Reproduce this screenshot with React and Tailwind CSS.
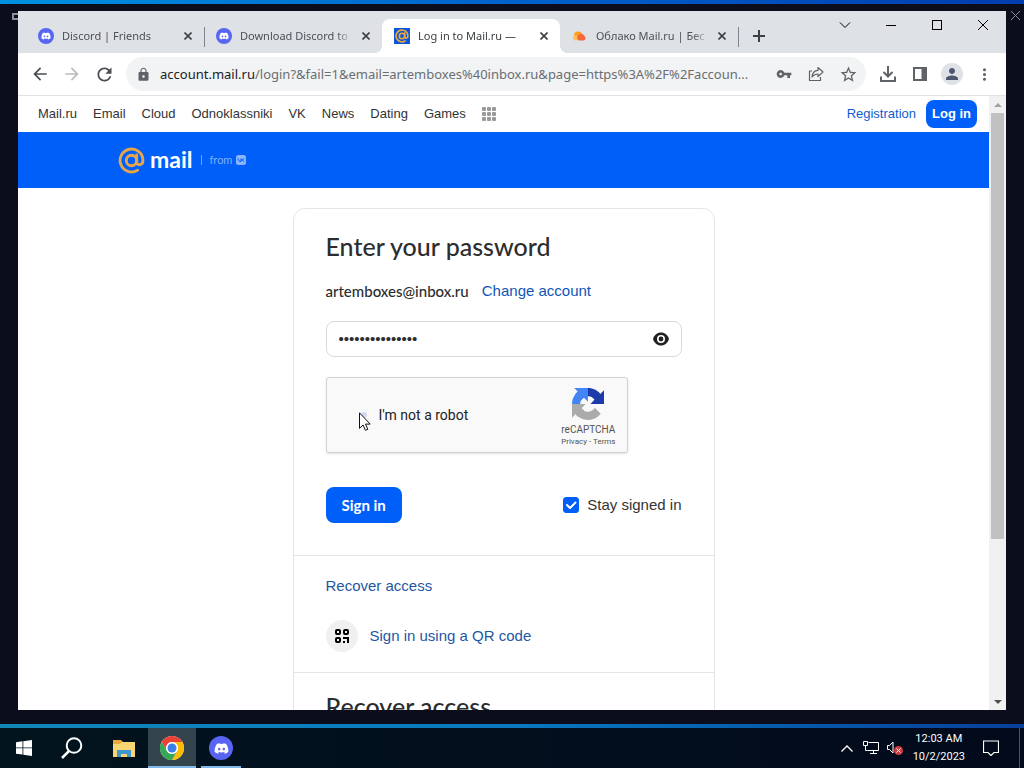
import React, { useState } from 'react';
import { FaDiscord } from 'react-icons/fa';
import {
  MdArrowBack,
  MdArrowForward,
  MdRefresh,
  MdLock,
  MdVpnKey,
  MdStarBorder,
  MdPerson,
  MdMoreVert,
} from 'react-icons/md';

const NAV_LINKS = ['Mail.ru', 'Email', 'Cloud', 'Odnoklassniki', 'VK', 'News', 'Dating', 'Games'];

const DiscordIcon = () => (
  <span className="flex size-4 shrink-0 items-center justify-center rounded-full bg-[#5865f2] text-white">
    <FaDiscord size={10} />
  </span>
);

const AtSign = ({ className, strokeWidth = 2.8 }) => (
  <svg viewBox="0 0 26 26" className={className} fill="none" stroke="currentColor" strokeWidth={strokeWidth}>
    <circle cx="13" cy="13" r="5" />
    <path d="M18 7.6v6.800c0 3.800 6 3.600 6-1.400A11 11 0 1 0 18.800 22.300" strokeLinecap="round" />
  </svg>
);

const MailIcon = () => (
  <span className="flex size-4 shrink-0 items-center justify-center bg-[#0a55d8] text-[#f0a83a]">
    <AtSign className="size-[14px]" strokeWidth={3} />
  </span>
);

const CloudIcon = () => (
  <svg viewBox="0 0 16 16" className="size-4 shrink-0">
    <circle cx="6" cy="7.500" r="4" fill="#ff9e1b" />
    <circle cx="3.500" cy="9.800" r="2.600" fill="#ffc35a" />
    <path d="M7 12.500a3.300 3.300 0 0 1-.8-5.500 3.700 3.700 0 0 1 6 .8A2.500 2.500 0 0 1 11.500 12.500z" fill="#f4683c" />
  </svg>
);

const TABS = [
  { title: 'Discord | Friends', Icon: DiscordIcon, divider: true },
  { title: 'Download Discord to', Icon: DiscordIcon },
  { title: 'Log in to Mail.ru —', Icon: MailIcon, active: true },
  { title: 'Облако Mail.ru | Бес', Icon: CloudIcon, divider: true },
];

const Tab = ({ title, Icon, active, divider }) => (
  <div
    className={`relative flex h-[34px] w-[178px] min-w-0 items-center rounded-t-lg px-3 ${
      active ? 'bg-white' : ''
    }`}
  >
    {active && (
      <>
        <span className="absolute -left-2 bottom-0 size-2 bg-[radial-gradient(circle_at_0_0,transparent_8px,#fff_8px)]" />
        <span className="absolute -right-2 bottom-0 size-2 bg-[radial-gradient(circle_at_100%_0,transparent_8px,#fff_8px)]" />
      </>
    )}
    <Icon />
    <span
      className={`ml-2 min-w-0 flex-1 whitespace-nowrap text-[11px] leading-4 [mask-image:linear-gradient(to_right,#000_84%,transparent)] ${
        active ? 'text-[#3c4043]' : 'text-[#4d5156]'
      }`}
    >
      {title}
    </span>
    <button type="button" aria-label={`Close ${title}`} className="ml-2 shrink-0 text-[#3c4043]">
      <svg viewBox="0 0 8 8" className="size-2" stroke="currentColor" strokeWidth="1.600">
        <path d="M.5.5l7 7M7.500.500l-7 7" />
      </svg>
    </button>
    {divider && <span className="absolute -right-px top-2 h-5 w-px bg-[#80868b]" />}
  </div>
);

const TabStrip = () => (
  <div className="flex h-[42px] shrink-0 items-start justify-between bg-[#dee1e6]">
    <div className="flex min-w-0 items-end pl-2 pt-2">
      {TABS.map((tab) => (
        <Tab key={tab.title} {...tab} />
      ))}
      <button type="button" aria-label="New tab" className="flex h-[34px] w-[42px] items-center justify-center text-[#3c4043]">
        <svg viewBox="0 0 12 12" className="size-3" stroke="currentColor" strokeWidth="2">
          <path d="M6 0v12M0 6h12" />
        </svg>
      </button>
    </div>
    <div className="flex shrink-0 text-black">
      <button type="button" aria-label="Search tabs" className="flex h-7 w-[46px] items-center justify-center">
        <svg viewBox="0 0 12 12" className="size-3" fill="none" stroke="currentColor">
          <path d="M1 3.500l5 5 5-5" />
        </svg>
      </button>
      <button type="button" aria-label="Minimize" className="flex h-7 w-[46px] items-center justify-center">
        <span className="h-px w-[10px] bg-black" />
      </button>
      <button type="button" aria-label="Maximize" className="flex h-7 w-[46px] items-center justify-center">
        <span className="size-[10px] border border-black" />
      </button>
      <button type="button" aria-label="Close window" className="flex h-7 w-[46px] items-center justify-center">
        <svg viewBox="0 0 12 12" className="size-3" fill="none" stroke="currentColor">
          <path d="M1 1l10 10M11 1L1 11" />
        </svg>
      </button>
    </div>
  </div>
);

const ToolButton = ({ label, children, className = 'text-[#5f6368]' }) => (
  <button type="button" aria-label={label} className={`flex h-8 w-8 shrink-0 items-center justify-center ${className}`}>
    {children}
  </button>
);

const Toolbar = () => (
  <div className="flex h-[43px] shrink-0 items-center border-b border-[#dfe1e5] bg-white px-1.5">
    <ToolButton label="Back" className="text-[#4a4d51]">
      <MdArrowBack size={20} />
    </ToolButton>
    <ToolButton label="Forward" className="text-[#babcbe]">
      <MdArrowForward size={20} />
    </ToolButton>
    <ToolButton label="Reload" className="text-[#4a4d51]">
      <MdRefresh size={21} />
    </ToolButton>
    <div className="ml-1.5 flex h-[34px] min-w-0 flex-1 items-center rounded-full bg-[#f1f3f4] pl-2.5 pr-0.5">
      <MdLock size={15} className="shrink-0 text-[#5f6368]" />
      <div className="ml-[9px] min-w-0 flex-1 whitespace-nowrap text-[13px] leading-5 text-[#6a6e73]">
        <span className="text-[#202124]">account.mail.ru</span>
        /login?&amp;fail=1&amp;email=artemboxes%40inbox.ru&amp;page=https%3A%2F%2Faccoun...
      </div>
      <ToolButton label="Passwords">
        <MdVpnKey size={16} />
      </ToolButton>
      <ToolButton label="Share">
        <svg viewBox="0 0 16 16" className="size-4" fill="none" stroke="currentColor" strokeWidth="1.200" strokeLinejoin="round">
          <path d="M4 5H1.500v9.500h11V11" />
          <path d="M10 1.500l5 4.500-5 4.500V8C7.500 8 5.500 9 4 11c.3-4 2.700-6.500 6-6.700z" />
        </svg>
      </ToolButton>
      <ToolButton label="Bookmark">
        <MdStarBorder size={19} />
      </ToolButton>
    </div>
    <div className="ml-1.5 flex">
      <ToolButton label="Downloads">
        <svg viewBox="0 0 16 16" className="size-4" fill="none" stroke="currentColor" strokeWidth="2">
          <path d="M8 0v10M3.500 6L8 10.500 12.500 6M1 10.500V15h14v-4.500" />
        </svg>
      </ToolButton>
      <ToolButton label="Side panel">
        <svg viewBox="0 0 14 14" className="size-[14px]" fill="currentColor">
          <path fillRule="evenodd" d="M0 0h14v14H0zM2 2v10h6.500V2z" />
        </svg>
      </ToolButton>
      <ToolButton label="Profile">
        <span className="flex size-[22px] items-center justify-center rounded-full bg-[#dee1e6] text-[#4f5670]">
          <MdPerson size={18} />
        </span>
      </ToolButton>
      <ToolButton label="Menu">
        <MdMoreVert size={19} />
      </ToolButton>
    </div>
  </div>
);

const PortalNav = () => (
  <nav className="flex h-9 items-center justify-between pl-5 pr-3 text-[13px] text-[#333333]">
    <div className="flex items-center gap-4">
      {NAV_LINKS.map((link) => (
        <a key={link} href="#">
          {link}
        </a>
      ))}
      <button type="button" aria-label="All projects" className="grid grid-cols-3 gap-px">
        {Array.from({ length: 9 }, (_, i) => (
          <span key={i} className="size-1 rounded-[1px] bg-[#9a9a9a]" />
        ))}
      </button>
    </div>
    <div className="flex items-center gap-2.5">
      <a href="#" className="text-[#0f5bd0]">
        Registration
      </a>
      <button type="button" className="h-7 rounded-lg bg-[#005ff9] px-1.5 font-bold text-white">
        Log in
      </button>
    </div>
  </nav>
);

const Brand = () => (
  <header className="flex h-14 items-center bg-[#005ff9] px-[100px] font-['Lato',sans-serif]">
    <AtSign className="size-[27px] text-[#e5a54b]" />
    <span className="ml-[5px] pb-0.5 text-[23px] font-bold leading-7 text-white">mail</span>
    <span className="ml-2 h-2.5 w-px bg-[#6ba2fc]" />
    <span className="ml-2 text-[11px] leading-4 text-[#7fb0fd]">from</span>
    <svg viewBox="0 0 10 10" className="ml-1 size-2.5">
      <rect width="10" height="10" rx="2.500" fill="#8ab5fd" />
      <path d="M2 3.500c.3 2 1.400 3.100 3 3.100V3.500M8 3.500C7.700 4.600 6.500 5 5 5c1.500 0 2.600.6 3 1.700" stroke="#005ff9" fill="none" />
    </svg>
  </header>
);

const RecaptchaLogo = () => (
  <svg viewBox="0 0 64 64" className="size-8">
    <path
      d="M64 31.955l-.033-1.370V4.687l-7.160 7.160C50.948 4.674 42.033.093 32.050.093c-10.400 0-19.622 4.960-25.458 12.640l11.736 11.860a15.550 15.550 0 0 1 4.754-5.334c2.050-1.600 4.952-2.906 8.968-2.906.485 0 .860.057 1.135.163 4.976.393 9.288 3.140 11.828 7.124l-8.307 8.307L64 31.953"
      fill="#1c3aa9"
    />
    <path
      d="M31.862.094l-1.370.033H4.594l7.160 7.160C4.580 13.147 0 22.060 0 32.046c0 10.400 4.960 19.622 12.640 25.458L24.500 45.768a15.550 15.550 0 0 1-5.334-4.754c-1.600-2.050-2.906-4.952-2.906-8.968 0-.485.057-.860.163-1.135.393-4.976 3.140-9.288 7.124-11.828l8.307 8.307L31.860.095"
      fill="#4285f4"
    />
    <path
      d="M.001 32.045l.033 1.370v25.898l7.160-7.160c5.860 7.173 14.774 11.754 24.760 11.754 10.400 0 19.622-4.960 25.458-12.640l-11.736-11.860a15.550 15.550 0 0 1-4.754 5.334c-2.050 1.600-4.952 2.906-8.968 2.906-.485 0-.860-.057-1.135-.163-4.976-.393-9.288-3.140-11.828-7.124l8.307-8.307c-10.522.040-22.400.066-27.295-.005"
      fill="#ababab"
    />
  </svg>
);

const Cursor = () => (
  <svg viewBox="0 0 12 19" className="pointer-events-none absolute left-8 top-[34px] h-[19px] w-3">
    <path d="M.5.8v15.600l3.600-3.400 2.300 5.300 2.400-1-2.300-5.200h4.700z" fill="#fff" stroke="#111" />
  </svg>
);

const Recaptcha = () => (
  <div className="relative mt-5 flex h-[76px] max-w-[302px] items-center justify-between rounded-[3px] border border-[#d3d3d3] bg-[#f9f9f9] pl-3 pr-[11px] shadow-sm">
    <label className="flex items-center gap-3 font-['Roboto',sans-serif] text-[14px] text-[#222]">
      <span className="relative flex size-7 items-center justify-end">
        <input type="checkbox" className="absolute inset-0 opacity-0" />
        <span className="size-1.5 rounded-full bg-[#d5d9f2]" />
      </span>
      I'm not a robot
    </label>
    <div className="flex flex-col items-center pt-1.5 font-['Roboto',sans-serif] text-[#555]">
      <RecaptchaLogo />
      <span className="mt-1 text-[10px] leading-3">reCAPTCHA</span>
      <span className="text-[8px] leading-3">
        <a href="#">Privacy</a> - <a href="#">Terms</a>
      </span>
    </div>
    <Cursor />
  </div>
);

const LoginCard = () => {
  const [visible, setVisible] = useState(false);
  const [stay, setStay] = useState(true);

  return (
    <main className="mx-auto mt-5 w-full max-w-[422px] rounded-t-xl border border-[#e4e5e7] text-[15px] leading-5 text-[#2c2d2e]">
      <form className="px-8 pb-8 pt-[22px]" onSubmit={(e) => e.preventDefault()}>
        <h1 className="font-['Lato',sans-serif] text-[25px] font-medium leading-[30px]">Enter your password</h1>
        <div className="mt-5 flex gap-[13px]">
          <span className="font-['Lato',sans-serif] font-medium">artemboxes@inbox.ru</span>
          <a href="#" className="text-[#0f55b5]">
            Change account
          </a>
        </div>

        <div className="mt-5 flex h-9 items-center rounded-lg border border-[#d9dadc] px-3">
          <input
            type={visible ? 'text' : 'password'}
            aria-label="Password"
            defaultValue="qwertyuiopasdfg"
            className="min-w-0 flex-1 text-[15px] outline-none"
          />
          <button type="button" aria-label="Show password" onClick={() => setVisible((v) => !v)}>
            <svg viewBox="0 0 16 14" className="h-[14px] w-4">
              <path d="M8 .5C4.200.500 1.200 3 0 7c1.200 4 4.200 6.500 8 6.500s6.800-2.500 8-6.500C14.800 3 11.800.5 8 .5z" fill="#222" />
              <circle cx="8" cy="7" r="3.200" fill="#222" stroke="#fff" strokeWidth="1.600" />
            </svg>
          </button>
        </div>

        <Recaptcha />

        <div className="mt-[34px] flex items-center justify-between">
          <button
            type="submit"
            className="h-9 rounded-lg bg-[#005ff9] px-4 font-['Lato',sans-serif] text-[15px] font-bold text-white"
          >
            Sign in
          </button>
          <label className="flex items-center gap-2 text-[#333]">
            <span className="relative flex size-4">
              <input
                type="checkbox"
                checked={stay}
                onChange={(e) => setStay(e.target.checked)}
                className="size-4 appearance-none rounded-[3px] border border-[#005ff9] checked:bg-[#005ff9]"
              />
              <svg viewBox="0 0 16 16" className="pointer-events-none absolute inset-0" fill="none" stroke="#fff" strokeWidth="2">
                <path d="M4 8l3 3 5.500-5.500" strokeLinecap="round" strokeLinejoin="round" />
              </svg>
            </span>
            Stay signed in
          </label>
        </div>
      </form>

      <section className="border-t border-[#e4e5e7] px-8 py-5 text-[#1f57a4]">
        <a href="#">Recover access</a>
        <a href="#" className="mt-6 flex items-center gap-3">
          <span className="flex size-8 items-center justify-center rounded-full bg-[#f0f0f0] text-black">
            <svg viewBox="0 0 14 14" className="size-[14px]" fill="none" stroke="currentColor" strokeWidth="2">
              <rect x="1" y="1" width="4" height="4" rx="1" />
              <rect x="9" y="1" width="4" height="4" rx="1" />
              <rect x="1" y="9" width="4" height="4" rx="1" />
              <path d="M8 9h5v5M8 13h2" />
            </svg>
          </span>
          Sign in using a QR code
        </a>
      </section>

      <section className="border-t border-[#e4e5e7] px-8 py-[18px]">
        <h2 className="font-['Lato',sans-serif] text-[25px] font-medium leading-[30px]">Recover access</h2>
      </section>
    </main>
  );
};

const Scrollbar = () => (
  <div className="flex w-[17px] shrink-0 flex-col bg-[#f1f1f1]">
    <div className="flex h-[17px] shrink-0 items-center justify-center">
      <svg viewBox="0 0 8 4" className="h-1 w-2">
        <path d="M0 4l4-4 4 4z" fill="#a3a3a3" />
      </svg>
    </div>
    <div className="min-h-0 flex-1 px-[2px]">
      <div className="h-[73.5%] bg-[#c1c1c1]" />
    </div>
    <div className="flex h-[17px] shrink-0 items-center justify-center">
      <svg viewBox="0 0 8 4" className="h-1 w-2">
        <path d="M0 0l4 4 4-4z" fill="#505050" />
      </svg>
    </div>
  </div>
);

const ChromeLogo = () => (
  <svg viewBox="0 0 48 48" className="size-6">
    <circle cx="24" cy="24" r="24" fill="#fff" />
    <path d="M3.200 12A24 24 0 0 1 44.800 12H24a12 12 0 0 0-10.400 18z" fill="#ea4335" />
    <path d="M44.800 12A24 24 0 0 1 24 48l10.400-18A12 12 0 0 0 24 12z" fill="#fbbc05" />
    <path d="M24 48A24 24 0 0 1 3.200 12l10.400 18A12 12 0 0 0 34.400 30z" fill="#34a853" />
    <circle cx="24" cy="24" r="11.500" fill="#fff" />
    <circle cx="24" cy="24" r="9" fill="#3b7de9" />
  </svg>
);

const TaskButton = ({ label, running, active, children }) => (
  <button
    type="button"
    aria-label={label}
    className={`relative flex h-full w-12 items-center justify-center ${active ? 'bg-[#33444d]' : ''}`}
  >
    {children}
    {running && (
      <span className={`absolute bottom-0 h-0.5 bg-[#82b8ea] ${active ? 'inset-x-0' : 'inset-x-1'}`} />
    )}
  </button>
);

const Taskbar = () => (
  <footer className="flex h-10 shrink-0 items-center justify-between bg-linear-to-r from-[#02141e] to-[#020a1c] text-white">
    <div className="flex h-full">
      <TaskButton label="Start">
        <svg viewBox="0 0 16 16" className="size-4" fill="currentColor">
          <path d="M0 2.200L6.500 1.300v6.200H0zM7.300 1.200L16 0v7.500H7.300zM0 8.300h6.500v6.300L0 13.700zM7.300 8.300H16V16l-8.700-1.200z" />
        </svg>
      </TaskButton>
      <TaskButton label="Search">
        <svg viewBox="0 0 22 22" className="size-[22px]" fill="none" stroke="currentColor" strokeWidth="2">
          <circle cx="13" cy="8.500" r="7.300" />
          <path d="M8 14L1 21" strokeWidth="2.500" />
        </svg>
      </TaskButton>
      <div className="w-1" />
      <TaskButton label="File Explorer">
        <svg viewBox="0 0 22 19" className="h-[19px] w-[22px]">
          <path d="M0 1h8l2 2h12v15H0z" fill="#e9a93c" />
          <path d="M0 5h7l2-2h13v15H0z" fill="#f8d673" />
          <path d="M4 18v-7h14v7h-4v-3H8v3z" fill="#4097cf" />
        </svg>
      </TaskButton>
      <TaskButton label="Chrome" running active>
        <ChromeLogo />
      </TaskButton>
      <div className="w-px" />
      <TaskButton label="Discord" running>
        <span className="flex size-6 items-center justify-center rounded-full bg-[#5865f2]">
          <FaDiscord size={15} />
        </span>
      </TaskButton>
    </div>
    <div className="flex h-full items-center">
      <svg viewBox="0 0 12 7" className="h-[7px] w-3" fill="none" stroke="currentColor" strokeWidth="1.300">
        <path d="M.5 6.500L6 1l5.500 5.500" />
      </svg>
      <svg viewBox="0 0 16 14" className="ml-2.5 h-[14px] w-4" fill="none" stroke="currentColor">
        <path d="M5.500 1.500h10v8H4.500M10.500 9.500v3M7 12.500h7M.500.500h4v4h-4zM2.500 4.500v5h2" />
      </svg>
      <svg viewBox="0 0 16 14" className="ml-2 h-[14px] w-4" fill="none" stroke="currentColor">
        <path d="M.5 4.500v4h2L6 12V1L2.500 4.500z" />
        <circle cx="11.500" cy="9.500" r="4.500" fill="#cf3b3b" stroke="none" />
        <path d="M9.500 7.500l4 4M13.500 7.500l-4 4" />
      </svg>
      <div className="ml-2.5 text-center font-['Roboto',sans-serif] text-[11px] leading-[18px]">
        <div>12:03 AM</div>
        <div>10/2/2023</div>
      </div>
      <svg viewBox="0 0 16 16" className="ml-[18px] size-4" fill="none" stroke="currentColor" strokeWidth="1.200">
        <path d="M.5 1h15v11.500H11L8 15.500l-3-3H.5z" />
      </svg>
      <div className="ml-5 h-full w-[5px] border-l border-[#4a5563]" />
    </div>
  </footer>
);

const App = () => (
  <div className="flex h-screen flex-col overflow-hidden bg-[#0b0c1c] font-['Liberation_Sans',Arial,sans-serif]">
    <div className="h-1 shrink-0 bg-linear-to-r from-[#0091e0] via-[#0062cb] to-[#003cb0]" />
    <div className="flex min-h-0 flex-1 pb-3.5 pt-[7px]">
      <div className="flex w-[18px] shrink-0 justify-end overflow-hidden">
        <span className="mt-0.5 h-[7px] w-1.5 border-2 border-r-0 border-[#8d8f98]" />
      </div>
      <div className="flex min-w-0 flex-1 flex-col bg-white">
        <div className="flex shrink-0 flex-col font-['Noto_Sans',sans-serif]">
          <TabStrip />
          <Toolbar />
        </div>
        <div className="flex min-h-0 flex-1">
          <div className="min-w-0 flex-1 overflow-hidden">
            <PortalNav />
            <Brand />
            <LoginCard />
          </div>
          <Scrollbar />
        </div>
      </div>
      <div className="w-[18px] shrink-0 pl-[5px]">
        <svg viewBox="0 0 9 9" className="size-[9px]" stroke="#8d8f98" fill="none">
          <path d="M0 0l9 9M9 0L0 9" />
        </svg>
      </div>
    </div>
    <div className="h-1 shrink-0 bg-linear-to-r from-[#1087b8] via-[#0a78c0] to-[#08409a]" />
    <Taskbar />
  </div>
);

export default App;
